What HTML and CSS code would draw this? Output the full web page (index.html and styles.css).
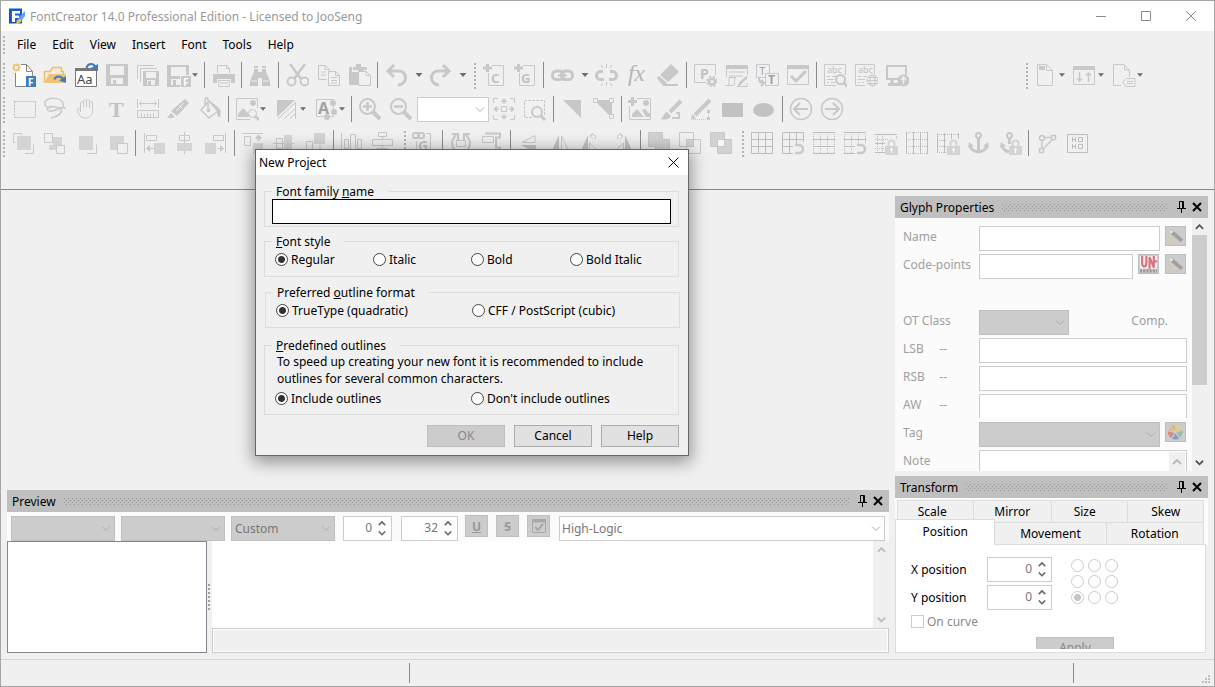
FILE: index.html
```html
<!DOCTYPE html>
<html lang="en">
<head>
<meta charset="utf-8">
<title>FontCreator 14.0 Professional Edition</title>
<link rel="stylesheet" href="styles.css">
</head>
<body>
<svg class="sprite" aria-hidden="true">
  <symbol id="chev-down" viewBox="0 0 10 6"><path d="M1 .5 5 4.500 9 .5"/></symbol>
  <symbol id="chev-up" viewBox="0 0 10 6"><path d="M1 5 5 1 9 5"/></symbol>
  <symbol id="caret" viewBox="0 0 7 4"><path d="M0 0h7L3.500 4z"/></symbol>
  <symbol id="pin" viewBox="0 0 9 12"><path d="M2.500 7V.5h4V7M0 7.500h9M4.500 7v5M5.500 1v6"/></symbol>
  <symbol id="cross" viewBox="0 0 10 10"><path d="M1 1l8 8M9 1 1 9"/></symbol>
  <symbol id="lock" viewBox="0 0 13 16"><path d="M3.500 7V4.500a3 3 0 0 1 6 0V7" fill="none" stroke="#d4d4d4" stroke-width="2"/><path d="M0 7h13v9H0z" fill="#d4d4d4" stroke="none"/><path d="M6.500 9v5M5 10.500h3" stroke="#fff"/></symbol>
  <symbol id="wand" viewBox="0 0 16 16"><path d="M4 1l11 9.500-2 3L2 4z" fill="#a0a0a0"/><path d="M4 1.500 6 3.500 4 5.500 2 4z" fill="#e6e6e6"/><path d="M1 8h1M3 11h1M6 9h1M9 14h1M1 15h1M6 13h1" stroke="#e2c48e" stroke-width="2"/></symbol>
</svg>

<div class="window">
  <header class="titlebar">
    <svg class="logo" viewBox="0 0 16 16"><path d="M0 .500h13v15H0z" fill="#1652b8"/><path d="M1.500 2h10v12h-10z" fill="#1b62e0"/><path d="M3 3h8v2.500H6v2h4V10H6v4H3z" fill="#fff"/><path d="M16 3 11 8l-2 4 3 1 4-5z" fill="#58a8e8"/><path d="M8 12l3-1 2 2-4 3H7z" fill="#e8c64a"/></svg>
    <h1 class="title">FontCreator 14.0 Professional Edition - Licensed to JooSeng</h1>
    <div class="caption">
      <button aria-label="Minimize"><svg viewBox="0 0 10 10"><path d="M0 5.500h10"/></svg></button>
      <button aria-label="Maximize"><svg viewBox="0 0 10 10"><path d="M.5.5h9v9h-9z"/></svg></button>
      <button aria-label="Close"><svg viewBox="0 0 10 10"><path d="M0 0l10 10M10 0 0 10"/></svg></button>
    </div>
  </header>

  <nav class="menubar">
    <span class="grip"></span>
    <button>File</button><button>Edit</button><button>View</button><button>Insert</button><button>Font</button><button>Tools</button><button>Help</button>
  </nav>

  <div class="toolbars">
    <div class="toolbar">
      <span class="grip"></span>
      <button aria-label="New project"><svg viewBox="0 0 24 24"><path d="M3.500 10v13.500h17V8.500l-6-7H9M14.500 1.500v7h6" fill="#fff" stroke="#858585"/><path d="M4.500.500v8M.500 4.500h8M1.500 1.500l6 6M7.500 1.500l-6 6" stroke="#efc277" stroke-width="2"/><path d="M3 3h3v3H3z" fill="#f0f0f0" stroke="none"/><path d="M14 13h10v11H14z" fill="#3f7cbb" stroke="none"/><text x="16" y="22.500" font-size="10" fill="#fff">F</text></svg></button>
      <button aria-label="Open"><svg viewBox="0 0 24 24"><path d="M1.500 19.500v-11h6l2-4h9v4h2v3" stroke="#e9bf76" stroke-width="1.500" fill="#f6ecd8"/><path d="M1 20l5-9h17l-2 9z" fill="#efc277" stroke="none"/><path d="M11.500 16.500c1-4 7-4 8.500 0" stroke="#3f7cbb" stroke-width="2"/><path d="M16 17.500 23 13v7z" fill="#3f7cbb" stroke="none"/></svg></button>
      <button aria-label="Installed fonts"><svg viewBox="0 0 24 24"><path d="M1.500 5.500h21v18h-21z" fill="#fff" stroke="#777"/><path d="M1 5h22v3H1z" fill="#777" stroke="none"/><text x="3" y="21" font-size="13" fill="#444">Aa</text><path d="M12.500 5c1-5 7-5 8.500-1.500" stroke="#3f7cbb" stroke-width="2"/><path d="M17 5 24 1v7z" fill="#3f7cbb" stroke="none"/></svg></button>
      <button aria-label="Save" disabled><svg viewBox="0 0 24 24"><path class="f" d="M1 1h22v22H1zM5 3v9h14V3zM6 15v6h12v-6z" fill-rule="evenodd"/><path class="f" d="M8 17h3v5H8z"/></svg></button>
      <button aria-label="Save all" disabled><svg viewBox="0 0 24 24"><path d="M1.500 16V2.500H18M4.500 19V5.500H21"/><path class="f" d="M7 8h16v15H7zM10 9v6h10V9zM11 17v5h8v-5z" fill-rule="evenodd"/><path class="f" d="M12 18h3v4h-3z"/></svg></button>
      <button class="drop" aria-label="Export font" disabled><svg viewBox="0 0 24 24"><path class="f" d="M0 2h22v10h-3V4H4v9h9v11H0zM4 16v6h9v-6z" fill-rule="evenodd"/><path class="f" d="M6 17h3v5H6zM14 13h10v11H14z"/><text x="16" y="22.500" font-size="10" class="w">F</text></svg><svg class="caret"><use href="#caret"/></svg></button>
      <span class="sep"></span>
      <button aria-label="Print" disabled><svg viewBox="0 0 24 24"><path d="M6.500 10V2.500h9l3 3V10M15.500 2.500v3h3"/><path class="f" d="M2 11h22v9h-4v-4H6v4H2z"/><path d="M7.500 17.500h11v6h-11zM9 20h8"/></svg></button>
      <span class="sep"></span>
      <button aria-label="Find" disabled><svg viewBox="0 0 24 24"><path class="f" d="M6 6h4v3h4V6h4v3l4 9v5h-8v-8h-4v8H2v-5L6 9zM6 5V3h4v2zM14 5V3h4v2z"/><path d="M3 18h6M15 18h6" stroke="#f0f0f0"/></svg></button>
      <span class="sep"></span>
      <button aria-label="Cut" disabled><svg viewBox="0 0 24 24"><path d="M5 1l11 15M20 1 9 16" stroke-width="2.500"/><circle cx="6.500" cy="18.500" r="4" stroke-width="2"/><circle cx="19.500" cy="18.500" r="4" stroke-width="2"/></svg></button>
      <button aria-label="Copy" disabled><svg viewBox="0 0 24 24"><path d="M2.500 2.500h7l4 4v3M9 2.500v4h4M2.500 2.500v14h8M5 9h5M5 12h5M12.500 8.500h7l4 4v10h-11zM19.500 8.500v4h4M15 14.500h6M15 17.500h6M15 20h6"/></svg></button>
      <button aria-label="Paste" disabled><svg viewBox="0 0 24 24"><path class="f" d="M2 4h3v5h12V4h3v3h-9v15H2z"/><path class="f" d="M6 4h3V1h5v3h3v3H6z"/><path d="M11.500 8.500h8l4 4v10h-12zM19 8.500v4h4" fill="#f0f0f0"/></svg></button>
      <span class="sep"></span>
      <button class="drop wide" aria-label="Undo" disabled><svg viewBox="0 0 24 24"><path d="M10 2 4 8l6 6M4 8h10c10 0 10 13 0 14" stroke-width="3"/></svg><svg class="caret"><use href="#caret"/></svg></button>
      <button class="drop wide" aria-label="Redo" disabled><svg viewBox="0 0 24 24"><path d="M15 2l6 6-6 6M21 8H11C1 8 1 21 11 22" stroke-width="3"/></svg><svg class="caret"><use href="#caret"/></svg></button>
      <span class="grip mid"></span>
      <button aria-label="Add character" disabled><svg viewBox="0 0 24 24"><path d="M10 2.500h11.500v20h-15V10"/><path d="M5.500 1v8M1 5h9" stroke-width="3"/><text x="9" y="19.500" font-size="13">C</text></svg></button>
      <button aria-label="Add glyph" disabled><svg viewBox="0 0 24 24"><path d="M10 2.500h11.500v20h-15V10"/><path d="M5.500 1v8M1 5h9" stroke-width="3"/><text x="8" y="19.500" font-size="13">G</text></svg></button>
      <span class="sep"></span>
      <button class="drop wide" aria-label="Link" disabled><svg viewBox="0 0 24 24"><rect x="2.500" y="8" width="11" height="8.500" rx="4" stroke-width="3"/><rect x="11.500" y="8" width="11" height="8.500" rx="4" stroke-width="3"/><path d="M8 12.500h9" stroke-width="2"/></svg><svg class="caret"><use href="#caret"/></svg></button>
      <button aria-label="Unlink" disabled><svg viewBox="0 0 24 24"><path d="M9 8.500H6a3.500 4 0 0 0 0 8h4M16 8.500h3a3.500 4 0 0 1 0 8h-4" stroke-width="3"/><path d="M12.500 1v4M12.500 19v4M7 2l2 3M18 2l-2 3M7 23l2-3M18 23l-2-3"/></svg></button>
      <button aria-label="Function" disabled><svg viewBox="0 0 24 24"><text class="fx" x="3" y="18">fx</text></svg></button>
      <button aria-label="Eraser" disabled><svg viewBox="0 0 24 24"><path class="f" d="M15 1l8 8L12 19l-8-7z"/><path d="M2 15l6 7h14" stroke-width="2"/><path class="f" d="M1 15l2-2 8 7-2 3H8z"/></svg></button>
      <span class="sep"></span>
      <button aria-label="Project properties" disabled><svg viewBox="0 0 24 24"><path d="M13 19.500H1.500v-18h21V12"/><text x="7" y="16" font-size="14">P</text><circle cx="19" cy="18.500" r="3" stroke-width="2.500"/><circle cx="19" cy="18.500" r="5" stroke-width="1.500" stroke-dasharray="2 2"/></svg></button>
      <button aria-label="Feature designer" disabled><svg viewBox="0 0 24 24"><path d="M2.500 2.500h21V12M2.500 2.500V14M5 9h16M5 13h14M1 22.500h8c3 0 0-8 3-8H5v8M14 23l2-4 7-6M13 23.500h10V20"/><path class="f" d="M2 2h22v4H2z"/><path d="M15 22l8-8" stroke-width="2"/></svg></button>
      <button aria-label="Transform script" disabled><svg viewBox="0 0 24 24"><path d="M1.500 1.500h13v13h-13z" fill="#f0f0f0"/><path d="M10.500 10.500h13v12h-13z" fill="#f0f0f0"/><text x="4.500" y="12" font-size="10" class="d n">T</text><text x="13" y="21" font-size="12" class="d">T</text><path d="M4 15c0 4 1 5 5 5M6 17l3 3-3 3" stroke-width="2"/></svg></button>
      <button aria-label="Validate" disabled><svg viewBox="0 0 24 24"><path d="M1.500 2.500h21v19h-21z"/><path class="f" d="M1 2h22v4H1z"/><path d="M5 13l5 5L20 8" stroke-width="3"/></svg></button>
      <span class="sep"></span>
      <button aria-label="Preview text" disabled><svg viewBox="0 0 24 24"><path d="M13 22.500H1.500v-21h21V12"/><text class="n" x="4" y="10" font-size="9">abc</text><path d="M4 13.500h3m2 0h4M4 16.500h7M4 19.500h2m2 0h4"/><circle cx="17.500" cy="16.500" r="4.500" stroke-width="2"/><path d="M20.500 19.500l4 4" stroke-width="3"/></svg></button>
      <button aria-label="Web preview" disabled><svg viewBox="0 0 24 24"><path d="M11 22.500H1.500v-21h19V11"/><text class="n" x="4" y="10" font-size="9">abc</text><path d="M4 13.500h3m2 0h4M4 16.500h7M4 19.500h2m2 0h2"/><circle cx="18.500" cy="17.500" r="5.500"/><ellipse cx="18.500" cy="17.500" rx="2.500" ry="5.500"/><path d="M13 17.500h11M14 14.500h9M14 20.500h9"/></svg></button>
      <button aria-label="Install font" disabled><svg viewBox="0 0 24 24"><path d="M14 16H2V3h19v9" stroke-width="2"/><path d="M7 17v5M3 21.500h12" stroke-width="3"/><circle class="f" cx="18.500" cy="17.500" r="6"/><path d="M18.500 21v-6M16 17l2.500-3 2.500 3" stroke="#f0f0f0" stroke-width="1.500"/></svg></button>
      <div class="tool-end">
        <span class="grip mid"></span>
        <button class="drop mid" aria-label="Page" disabled><svg viewBox="0 0 24 24"><path d="M3.500 1.500h9l6 6v15h-15zM12.500 1.500v6h6"/><path class="f" d="M5 3h6v4H5z"/></svg><svg class="caret"><use href="#caret"/></svg></button>
        <button class="drop mid" aria-label="Sort" disabled><svg viewBox="0 0 24 24"><path d="M.500 3.500h21v18H.500z"/><path class="f" d="M0 3h22v4H0z"/><path d="M6.500 9v9M4 15.500 6.500 18 9 15.500M15.500 19v-9M13 12.500l2.500-2.500 2.500 2.500" stroke-width="1.500"/></svg><svg class="caret"><use href="#caret"/></svg></button>
        <button class="drop mid" aria-label="Tag page" disabled><svg viewBox="0 0 24 24"><path d="M9 22.500H1.500v-21h10l6 5.500v7M12.500 1.500V7h5M10.500 19l4-3.500h8.500v8h-9zM15 18.500h6M15 20.500h6"/></svg><svg class="caret"><use href="#caret"/></svg></button>
      </div>
    </div>

    <div class="toolbar">
      <span class="grip"></span>
      <button aria-label="Select" disabled><svg viewBox="0 0 24 24"><path class="k" d="M2.500 4.500h21M2.500 20.500h21M2.500 4.500v16M23.500 4.500v16" stroke-dasharray="2 1"/></svg></button>
      <button aria-label="Lasso" disabled><svg viewBox="0 0 24 24"><path d="M8 11C3 11 1 8 2 5c3-5 16-5 18 1 1 3 0 5-3 5-4 0-7-3-11-1s-1 5 3 4c6-1 8-4 14-3M18 12c2 4-4 8-10 9" stroke-width="1.500"/></svg></button>
      <button aria-label="Pan" disabled><svg viewBox="0 0 24 24"><path d="M6.500 15V6c0-2 3-2 3 0v4-6c0-2 3-2 3 0v6-6c0-2 3-2 3 0v7-5c0-2 3-2 3 0v8c0 8-11 10-14 2L3.500 13c0-3 2-2 3 0"/></svg></button>
      <button aria-label="Text" disabled><svg viewBox="0 0 24 24"><text class="serif" x="4" y="20">T</text></svg></button>
      <button aria-label="Measure" disabled><svg viewBox="0 0 24 24"><path d="M1.500 2v9M22.500 2v9M3 6.500h18M6 4 3.500 6.500 6 9M18 4l2.500 2.500L18 9M1.500 13.500h21v7h-21zM5.500 16v4M8.500 17v3M11.500 16v4M14.500 17v3M17.500 16v4"/></svg></button>
      <button aria-label="Knife" disabled><svg viewBox="0 0 24 24"><path class="f" d="M18 2l4 4-12 13-6-5zM4 16l4 4-3 1H0z"/><path d="M9 14l8-8M12 8l3 3" stroke="#f0f0f0"/></svg></button>
      <button aria-label="Fill" disabled><svg viewBox="0 0 24 24"><path d="M11 4 3 13l8 8 9-7zM10 12V3c0-3-3-3-3 0v5" stroke-width="1.500"/><path class="f" d="M11 3l10 8c2 2 2 6 1 9-2 1-3-2-3-6zM9 12h3v3H9z"/></svg></button>
      <span class="sep"></span>
      <button class="drop step" aria-label="Background image" disabled><svg viewBox="0 0 24 24"><path d="M15 22.500H1.500v-21h21v10"/><circle class="f" cx="18" cy="6" r="3"/><path class="f" d="M3 20v-3l5-6 6 6v3z"/><circle cx="17.500" cy="16.500" r="4"/><path d="M20 19l4 4" stroke-width="3"/></svg><svg class="caret"><use href="#caret"/></svg></button>
      <button class="drop mid" aria-label="Contour fill" disabled><svg viewBox="0 0 24 24"><path class="f" d="M2 3h18L2 20z"/><path d="M3 22 21 5M9 22 21 11M15 22l6-6M20.500 5v17"/></svg><svg class="caret"><use href="#caret"/></svg></button>
      <button class="drop" aria-label="Glyph outline" disabled><svg viewBox="0 0 24 24"><path d="M2.500 2.500h17v17h-17z"/><text class="d" x="4" y="17" font-size="16">A</text><g class="f"><circle cx="19" cy="6" r="3"/><circle cx="20" cy="15" r="3"/><circle cx="13" cy="20" r="3"/></g></svg><svg class="caret"><use href="#caret"/></svg></button>
      <span class="sep"></span>
      <button aria-label="Zoom in" disabled><svg viewBox="0 0 24 24"><circle cx="9.500" cy="9.500" r="7.500" stroke-width="2"/><path d="M15 15l7 7" stroke-width="4"/><path d="M5 9.500h9M9.500 5v9" stroke-width="2.500"/></svg></button>
      <button aria-label="Zoom out" disabled><svg viewBox="0 0 24 24"><circle cx="9.500" cy="9.500" r="7.500" stroke-width="2"/><path d="M15 15l7 7" stroke-width="4"/><path d="M5 9.500h9" stroke-width="2.500"/></svg></button>
      <span class="select zoom"><select aria-label="Zoom"><option></option></select><svg><use href="#chev-down"/></svg></span>
      <button aria-label="Zoom to fit" disabled><svg viewBox="0 0 24 24"><path d="M1.500 6V1.500H6M18 1.500h4.500V6M22.500 18v4.500H18M6 22.500H1.500V18M9.500 9.500h5v5h-5z"/><path d="M12 7V3M9.500 5 12 2.500 14.500 5M12 17v4M9.500 19l2.500 2.500 2.500-2.500M7 12H3M5 9.500 2.500 12 5 14.500M17 12h4M19 9.500l2.500 2.500-2.500 2.500" stroke-width="1.500"/></svg></button>
      <button aria-label="Zoom to selection" disabled><svg viewBox="0 0 24 24"><path d="M9 20.500H1.500v-17h20V18" stroke-dasharray="3 1"/><circle cx="14" cy="15" r="5" fill="#f0f0f0" stroke-width="2"/><path d="M18 19l4 4" stroke-width="3"/></svg></button>
      <span class="sep"></span>
      <button aria-label="Filled contour" disabled><svg viewBox="0 0 24 24"><path class="f" d="M3 3h18v18z"/></svg></button>
      <button aria-label="Show nodes" disabled><svg viewBox="0 0 24 24"><path class="f" d="M3 3h18v18z"/><path d="M2.500 1.500h4v4h-4zM18.500 1.500h4v4h-4zM18.500 17.500h4v4h-4z" fill="#f0f0f0"/></svg></button>
      <span class="sep"></span>
      <button aria-label="Import image" disabled><svg viewBox="0 0 24 24"><path d="M9 1.500h13.500v21h-21V9"/><path d="M4.500 0v9M0 4.500h9" stroke-width="3"/><circle class="f" cx="18" cy="6" r="3"/><path class="f" d="M4 20v-3l5-5 7 8zM14 13l3-1 5 5v3h-4z"/></svg></button>
      <button aria-label="Draw brush" disabled><svg viewBox="0 0 24 24"><path d="M11 15 22 4" stroke-width="4"/><path class="f" d="M1 22c4-1 3-6 7-7l4 4c-1 3-5 4-11 3z"/><path d="M13 21h7v-5h-3" stroke-width="2"/></svg></button>
      <button aria-label="Draw contour" disabled><svg viewBox="0 0 24 24"><path d="M5 18 20 3" stroke-width="4"/><path class="f" d="M2 17l4 4-5 2zM17 13h3v3h-3zM17 20h3v3h-3z"/><path d="M3 22.500h14M18.500 16v4" stroke-dasharray="1 1"/></svg></button>
      <button aria-label="Rectangle" disabled><svg viewBox="0 0 24 24"><path class="f b" d="M1 6h21v14H1z"/></svg></button>
      <button aria-label="Ellipse" disabled><svg viewBox="0 0 24 24"><ellipse class="f b" cx="11.500" cy="13" rx="10.500" ry="7"/></svg></button>
      <span class="sep"></span>
      <button aria-label="Previous" disabled><svg viewBox="0 0 24 24"><circle cx="12" cy="12" r="10.500" stroke-width="1.500"/><path d="M11 6l-6 6 6 6M6 12h13" stroke-width="2"/></svg></button>
      <button aria-label="Next" disabled><svg viewBox="0 0 24 24"><circle cx="12" cy="12" r="10.500" stroke-width="1.500"/><path d="M13 6l6 6-6 6M18 12H5" stroke-width="2"/></svg></button>
    </div>

    <div class="toolbar">
      <span class="grip"></span>
      <button aria-label="Bring to front" disabled><svg viewBox="0 0 24 24"><path class="f l" d="M5 5h14v14H5z"/><path d="M3.500 11.500h-2v-9h8v2M13 22.500h8.500v-9"/></svg></button>
      <button aria-label="Bring forward" disabled><svg viewBox="0 0 24 24"><path class="f l" d="M10 6h9v8h-6v5H6v-5h4z"/><path d="M1.500 2.500h8v9h-8zM13.500 14.500h8v8h-8z"/></svg></button>
      <button aria-label="Send backward" disabled><svg viewBox="0 0 24 24"><path class="f l" d="M5 5h14v14H5z"/><path d="M13 22.500h9.500v-9"/></svg></button>
      <button aria-label="Send to back" disabled><svg viewBox="0 0 24 24"><path class="f l" d="M5 5h14v14H5z"/><path d="M12.500 12.500h10v10h-10z" fill="#f0f0f0"/></svg></button>
      <span class="sep"></span>
      <button aria-label="Align left" disabled><svg viewBox="0 0 24 24"><path d="M2.500 2v20M4.500 4.500h10v5h-10zM5 17.500h7"/><path class="f" d="M4 17.500 8 14v7z"/><path class="f l" d="M12 12h11v11H12z"/></svg></button>
      <button aria-label="Align center" disabled><svg viewBox="0 0 24 24"><path d="M11.500 1v22M6.500 4.500h10v5h-10z"/><path class="f l" d="M4 12h15v8H4z"/></svg></button>
      <button aria-label="Align right" disabled><svg viewBox="0 0 24 24"><path d="M21.500 2v20M9.500 4.500h10v5h-10zM13 17.500h7"/><path class="f" d="M20 17.500 16 14v7z"/><path class="f l" d="M1 12h11v11H1z"/></svg></button>
      <span class="sep"></span>
      <button aria-label="Align top" disabled><svg viewBox="0 0 24 24"><path d="M1 2.500h21M3.500 5.500h6v9h-6z"/><path d="M17.500 10V5M15 7.500 17.500 5 20 7.500" stroke-width="2"/><path class="f l" d="M12 12h10v11H12z"/></svg></button>
      <button aria-label="Align middle" disabled><svg viewBox="0 0 24 24"><path d="M1 12.500h21M4.500 7.500h6v10h-6z"/><path class="f l" d="M12 4h8v16h-8z"/></svg></button>
      <button aria-label="Align bottom" disabled><svg viewBox="0 0 24 24"><path d="M3.500 10.500h6v10h-6zM1 22.500h21M17 14v5"/><path class="f l" d="M11 2h11v11H11z"/></svg></button>
      <span class="sep"></span>
      <button aria-label="Distribute horizontally" disabled><svg viewBox="0 0 24 24"><path d="M1.500 2v20M4.500 8.500h4v9h-4zM10.500 3.500h5v18h-5zM17.500 8.500h4v9h-4z"/></svg></button>
      <button aria-label="Distribute vertically" disabled><svg viewBox="0 0 24 24"><path d="M7.500 1.500h8v4h-8zM1.500 8.500h20v6h-20zM5.500 17.500h11v4h-11zM11.500 5v3M11.500 15v3"/></svg></button>
      <span class="grip mid"></span>
      <button aria-label="Link glyph" disabled><svg viewBox="0 0 24 24"><rect x="1" y="2" width="6" height="5" rx="2" stroke-width="2"/><rect x="6" y="2" width="6" height="5" rx="2" stroke-width="2"/><path d="M14 2.500h4.500v20h-14V10"/><text x="6" y="20" font-size="14">G</text></svg></button>
      <span class="sep"></span>
      <button aria-label="Rotate" disabled><svg viewBox="0 0 24 24"><path d="M7 4C0 11 3 21 12 21s12-10 5-17M3 3h6v6M21 3h-6v6" stroke-width="2"/><path d="M7.500 9.500h9v6h-9z"/></svg></button>
      <button aria-label="Skew" disabled><svg viewBox="0 0 24 24"><path d="M5 2.500h15v4h-4v10h4v4H9" stroke-width="2"/><path d="M2.500 5.500h11v6h-11z" fill="#f0f0f0"/></svg></button>
      <span class="sep"></span>
      <button aria-label="Flip vertical" disabled><svg viewBox="0 0 24 24"><path d="M5 11.500h13v-7z"/><path class="f b" d="M4 14h15v8z"/></svg></button>
      <button aria-label="Flip horizontal" disabled><svg viewBox="0 0 24 24"><path class="f b" d="M11 4v18H3z"/><path d="M13.500 5v17h8z"/></svg></button>
      <button aria-label="Rotate left" disabled><svg viewBox="0 0 24 24"><path class="f b" d="M9 4v18H1z"/><path d="M10.500 12 21 22H10.500zM16 8c2-5-2-5-5-3M14 2l-3 3 3 3"/></svg></button>
      <button aria-label="Rotate right" disabled><svg viewBox="0 0 24 24"><path class="f b" d="M15 4v18h8z"/><path d="M13.500 12 3 22h10.500zM8 8c-2-5 2-5 5-3M10 2l3 3-3 3"/></svg></button>
      <span class="sep"></span>
      <button aria-label="Union" disabled><svg viewBox="0 0 24 24"><path d="M1.500 1.500h14v7h7v14h-14v-7h-7z" fill="#d2d2d2"/></svg></button>
      <button aria-label="Intersection" disabled><svg viewBox="0 0 24 24"><path d="M1.500 1.500h14v14h-14zM8.500 8.500h14v14h-14z"/><path d="M8.500 8.500h7v7h-7z" fill="#d2d2d2"/></svg></button>
      <button aria-label="Exclusion" disabled><svg viewBox="0 0 24 24"><path d="M1.500 1.500h14v7h7v14h-14v-7h-7z" fill="#d2d2d2"/><path d="M8.500 8.500h7v7h-7z" fill="#f6f6f6"/></svg></button>
      <span class="grip mid"></span>
      <button aria-label="Grid" disabled><svg viewBox="0 0 24 24"><path class="k" d="M1.500 1.500h21v21h-21zM8.500 1v21M15.500 1v21M1 8.500h22M1 15.500h22"/></svg></button>
      <button aria-label="Snap to grid" disabled><svg viewBox="0 0 24 24"><path class="k" d="M22.500 11V1.500h-21v21H12M8.500 1v21M15.500 1v12M1 8.500h22M1 15.500h11"/><path d="M14 14h4a4 4 0 0 1 0 8h-4" stroke-width="2.500"/></svg></button>
      <button aria-label="Guidelines" disabled><svg viewBox="0 0 24 24"><path class="k" d="M1 1.500h22M1 8.500h22M1 15.500h22M1 22.500h22"/><path class="k" d="M1.500 1v22M8.500 1v22M15.500 1v22M22.500 1v22" stroke-dasharray="1 1"/></svg></button>
      <button aria-label="Snap to guidelines" disabled><svg viewBox="0 0 24 24"><path class="k" d="M1 1.500h22M1 8.500h22M1 15.500h11M1 22.500h11"/><path class="k" d="M1.500 1v22M8.500 1v22M15.500 1v12M22.500 1v11" stroke-dasharray="1 1"/><path d="M14 14h4a4 4 0 0 1 0 8h-4" stroke-width="2.500"/></svg></button>
      <button aria-label="Lock guidelines" disabled><svg viewBox="0 0 24 24"><path class="k" d="M1 3.500h22M1 12.500h10M1 21.500h10"/><path class="k" d="M1 8.500h14M1 17.500h10M3.500 3v19M8.500 3v19M22.500 3v5" stroke-dasharray="1 1"/><use href="#lock" x="11" y="8" width="13" height="16"/></svg></button>
      <button aria-label="Metrics" disabled><svg viewBox="0 0 24 24"><path class="k" d="M1.500 1v22M8.500 1v22M15.500 1v22M22.500 1v22"/><path class="k" d="M1 1.500h22M1 8.500h22M1 15.500h22M1 22.500h22" stroke-dasharray="1 1"/></svg></button>
      <button aria-label="Lock metrics" disabled><svg viewBox="0 0 24 24"><path class="k" d="M1.500 2v20M8.500 2v20M15.500 2v6M22.500 2v6"/><path class="k" d="M1 3.500h22M1 9.500h10M1 15.500h10M1 21.500h10" stroke-dasharray="1 1"/><use href="#lock" x="11" y="8" width="13" height="16"/></svg></button>
      <button aria-label="Anchors" disabled><svg viewBox="0 0 24 24"><circle cx="11.500" cy="4.500" r="2.500" stroke-width="2"/><path d="M11.500 7v14M3 14c1 9 16 9 17 0" stroke-width="3"/><path class="f" d="M1 17l1-6 5 4zM22 17l-1-6-5 4z"/></svg></button>
      <button aria-label="Lock anchors" disabled><svg viewBox="0 0 24 24"><circle cx="11.500" cy="4.500" r="2.500" stroke-width="2"/><path d="M11.500 7v6M4 14c1 5 4 6 7 7" stroke-width="3"/><path class="f" d="M2 17l1-6 5 4z"/><use href="#lock" x="11" y="8" width="13" height="16"/></svg></button>
      <span class="sep"></span>
      <button aria-label="Contour direction" disabled><svg viewBox="0 0 24 24"><circle cx="7" cy="7" r="2.500" stroke-width="1.500"/><path d="M10 6.500h6M7 10v7M9 17l8-8M16.500 4.500h4v4h-4zM4.500 17.500h4v4h-4z" stroke-width="1.500"/></svg></button>
      <button aria-label="Glyph overview" disabled><svg viewBox="0 0 24 24"><path class="k" d="M1.500 3.500h20v18h-20zM12.500 6.500h4v4h-4zM12.500 13.500h4v4h-4z"/><path class="k" d="M6.500 6v5M9.500 6v5M7 8.500h2M6.500 13v5M9.500 13v5M7 15.500h2"/></svg></button>
    </div>
  </div>

  <main class="workspace">
    <section class="left">
      <div class="panel preview">
        <header class="panel-head"><h2>Preview</h2><i class="tex"></i><button aria-label="Pin preview"><svg class="pin"><use href="#pin"/></svg></button><button aria-label="Close preview"><svg class="x"><use href="#cross"/></svg></button></header>
        <div class="preview-bar">
          <span class="select off"><select aria-label="Script" disabled><option></option></select><svg><use href="#chev-down"/></svg></span>
          <span class="select off"><select aria-label="Language" disabled><option></option></select><svg><use href="#chev-down"/></svg></span>
          <span class="select off"><select aria-label="Preset" disabled><option>Custom</option></select><svg><use href="#chev-down"/></svg></span>
          <span class="spin s1"><input aria-label="Spacing" value="0" disabled><span><button aria-label="More" disabled><svg><use href="#chev-up"/></svg></button><button aria-label="Less" disabled><svg><use href="#chev-down"/></svg></button></span></span>
          <span class="spin s2"><input aria-label="Font size" value="32" disabled><span><button aria-label="Larger" disabled><svg><use href="#chev-up"/></svg></button><button aria-label="Smaller" disabled><svg><use href="#chev-down"/></svg></button></span></span>
          <div class="toggles">
            <button class="sq" disabled><u>U</u></button>
            <button class="sq" disabled><s>S</s></button>
            <button class="sq" aria-label="Options" disabled><svg viewBox="0 0 14 14"><path d="M.500.500h13v13H.500z"/><path d="M0 2h14" stroke-width="3"/><path d="M3 8l3 3 5-6" stroke-width="2"/></svg></button>
          </div>
          <span class="select text"><select aria-label="Preview text"><option>High-Logic</option></select><svg><use href="#chev-down"/></svg></span>
        </div>
        <div class="preview-body">
          <div class="list"></div>
          <div class="splitter"><span></span></div>
          <div class="stage">
            <div class="canvas">
              <div class="bar"><button aria-label="Scroll up" disabled><svg><use href="#chev-up"/></svg></button><button aria-label="Scroll down" disabled><svg><use href="#chev-down"/></svg></button></div>
            </div>
            <div class="info"></div>
          </div>
        </div>
      </div>
    </section>

    <aside class="dock">
      <section class="panel glyph">
        <header class="panel-head"><h2>Glyph Properties</h2><i class="tex"></i><button aria-label="Pin glyph properties"><svg class="pin"><use href="#pin"/></svg></button><button aria-label="Close glyph properties"><svg class="x"><use href="#cross"/></svg></button></header>
        <div class="glyph-body">
          <form class="fields">
            <div class="row"><label for="g-name">Name</label><input id="g-name" disabled><button type="button" class="sq" aria-label="Generate name" disabled><svg><use href="#wand"/></svg></button></div>
            <div class="row"><label for="g-code">Code-points</label><input id="g-code" disabled><button type="button" class="sq tight" aria-label="Unicode" disabled><svg viewBox="0 0 16 16"><path d="M0 0h16v12H0z" fill="#f1f1f1"/><path d="M2 0v6c0 5 4 5 4 0V0M9 12V1l4 10V0M14 5h2" fill="none" stroke="#d9727f" stroke-width="2"/><path d="M0 14h16" stroke="#999" stroke-width="3" stroke-dasharray="2 1"/></svg></button><button type="button" class="sq" aria-label="Generate code-point" disabled><svg><use href="#wand"/></svg></button></div>
            <div class="row"></div>
            <div class="row"><label for="g-ot">OT Class</label><span class="select off short"><select id="g-ot" disabled><option></option></select><svg><use href="#chev-down"/></svg></span><span class="comp">Comp.</span></div>
            <div class="row"><label for="g-lsb">LSB <span>--</span></label><input id="g-lsb" disabled></div>
            <div class="row"><label for="g-rsb">RSB <span>--</span></label><input id="g-rsb" disabled></div>
            <div class="row cut"><label for="g-aw">AW <span>--</span></label><input id="g-aw" disabled></div>
            <div class="row"><label for="g-tag">Tag</label><span class="select off grow"><select id="g-tag" disabled><option></option></select><svg><use href="#chev-down"/></svg></span><button type="button" class="sq" aria-label="Tag colour" disabled><svg viewBox="0 0 16 16"><g stroke="#ccc"><path d="M8 8 2.500 2.500A8 8 0 0 1 8 .500z" fill="#dfb184"/><path d="M8 8V.500a8 8 0 0 1 7 5z" fill="#e2cd94"/><path d="M8 8l7-2.500a8 8 0 0 1-3 8z" fill="#9dbba9"/><path d="M8 8l4 6a8 8 0 0 1-8 0z" fill="#7e9dc8"/><path d="M8 8l-4 6a8 8 0 0 1-3.500-8z" fill="#d58d80"/><path d="M8 8 .500 6l2-3.500z" fill="#dfb184"/></g></svg></button></div>
            <div class="row"><label for="g-note">Note</label><span class="note"><textarea id="g-note" disabled></textarea><svg><use href="#chev-up"/></svg></span></div>
          </form>
          <div class="bar live"><button aria-label="Scroll up"><svg><use href="#chev-up"/></svg></button><i></i><button aria-label="Scroll down"><svg><use href="#chev-down"/></svg></button></div>
        </div>
      </section>

      <section class="panel transform">
        <header class="panel-head"><h2>Transform</h2><i class="tex"></i><button aria-label="Pin transform"><svg class="pin"><use href="#pin"/></svg></button><button aria-label="Close transform"><svg class="x"><use href="#cross"/></svg></button></header>
        <div class="tabs" role="tablist">
          <div class="tabrow"><button role="tab">Scale</button><button role="tab">Mirror</button><button role="tab">Size</button><button role="tab">Skew</button></div>
          <div class="tabrow second"><button role="tab" class="on" aria-selected="true">Position</button><button role="tab">Movement</button><button role="tab">Rotation</button></div>
        </div>
        <div class="tabpage">
          <div class="pos">
            <div class="posfields">
              <div class="posrow"><label for="px">X position</label><span class="spin s3"><input id="px" value="0" disabled><span><button aria-label="Increase X" disabled><svg><use href="#chev-up"/></svg></button><button aria-label="Decrease X" disabled><svg><use href="#chev-down"/></svg></button></span></span></div>
              <div class="posrow"><label for="py">Y position</label><span class="spin s3"><input id="py" value="0" disabled><span><button aria-label="Increase Y" disabled><svg><use href="#chev-up"/></svg></button><button aria-label="Decrease Y" disabled><svg><use href="#chev-down"/></svg></button></span></span></div>
            </div>
            <div class="origin" role="radiogroup" aria-label="Origin">
              <input type="radio" name="o" aria-label="Top left" disabled><input type="radio" name="o" aria-label="Top" disabled><input type="radio" name="o" aria-label="Top right" disabled>
              <input type="radio" name="o" aria-label="Left" disabled><input type="radio" name="o" aria-label="Center" disabled><input type="radio" name="o" aria-label="Right" disabled>
              <input type="radio" name="o" aria-label="Bottom left" checked disabled><input type="radio" name="o" aria-label="Bottom" disabled><input type="radio" name="o" aria-label="Bottom right" disabled>
            </div>
          </div>
          <label class="check"><input type="checkbox" disabled>On curve</label>
          <div class="applyrow"><button class="btn" disabled>Apply</button></div>
        </div>
      </section>
    </aside>
  </main>

  <footer class="status"><span></span><span></span><svg viewBox="0 0 9 9"><path d="M6 0h2v2H6zM3 3h2v2H3zM6 3h2v2H6zM0 6h2v2H0zM3 6h2v2H3zM6 6h2v2H6z"/></svg></footer>

  <div class="dialog" role="dialog" aria-labelledby="dlg-title">
    <header class="dialog-head"><h2 id="dlg-title">New Project</h2><button aria-label="Close dialog"><svg viewBox="0 0 11 11"><path d="M.500.500l10 10M10.500.500l-10 10"/></svg></button></header>
    <form class="dialog-body">
      <fieldset class="name"><legend><label for="family">Font family <u>n</u>ame</label></legend><input id="family" type="text"></fieldset>
      <fieldset class="opts"><legend><u>F</u>ont style</legend><div class="four">
        <label><input type="radio" name="style" checked>Regular</label><label><input type="radio" name="style">Italic</label><label><input type="radio" name="style">Bold</label><label><input type="radio" name="style">Bold Italic</label></div></fieldset>
      <fieldset class="opts format"><legend>Preferred <u>o</u>utline format</legend><div class="two">
        <label><input type="radio" name="fmt" checked>TrueType (quadratic)</label><label><input type="radio" name="fmt">CFF / PostScript (cubic)</label></div></fieldset>
      <fieldset class="opts outlines"><legend><u>P</u>redefined outlines</legend>
        <p>To speed up creating your new font it is recommended to include outlines for several common characters.</p>
        <div class="two"><label><input type="radio" name="out" checked>Include outlines</label><label><input type="radio" name="out">Don't include outlines</label></div></fieldset>
      <div class="actions"><button type="button" class="btn" disabled>OK</button><button type="button" class="btn">Cancel</button><button type="button" class="btn">Help</button></div>
    </form>
  </div>
</div>
</body>
</html>
```
FILE: styles.css
```css
* { box-sizing: border-box; }
body { margin: 0; font: 12px/17px "Noto Sans", "Open Sans", sans-serif; color: #000; background: #f0f0f0; }
h1, h2, p { margin: 0; font-size: 12px; font-weight: 400; }
button, input, select, textarea { font: inherit; color: inherit; margin: 0; }
button { border: 0; padding: 0; background: none; }
svg { display: block; flex: none; }
.sprite { display: none; }

.window { position: relative; display: flex; flex-direction: column; height: 100vh; border: 1px solid #a6a6a6; overflow: hidden; }

.titlebar { display: flex; align-items: center; height: 30px; background: #fff; padding: 0 1px 0 8px; flex: none; }
.logo { width: 16px; height: 16px; }
.title { flex: 1; margin-left: 5px; color: #999; }
.caption { display: flex; }
.caption button { width: 45px; height: 28px; display: grid; place-items: center; }
.caption svg { width: 10px; height: 10px; fill: none; stroke: #8a8a8a; }

.grip { width: 6px; height: 26px; flex: none; background: conic-gradient(from 270deg at 2px 2px, #b4b4b4 90deg, transparent 0) 0 0 / 6px 4px; margin-left: 2px; margin-top: 1px; }
.grip.mid { width: 10px; margin-left: 0; background: conic-gradient(from 270deg at 2px 2px, #b4b4b4 90deg, transparent 0) 5px 0 / 10px 4px; }
.menubar { display: flex; align-items: center; height: 27px; flex: none; }
.menubar .grip { height: 19px; }
.menubar button { padding: 0 8px; }

.toolbars { height: 132px; flex: none; border-bottom: 1px solid #738cab; }
.toolbar { display: flex; align-items: center; height: 34px; }
.toolbar > button, .tool-end button { display: flex; align-items: center; width: 31px; height: 28px; padding-left: 3px; }
.toolbar .drop { width: 38px; }
.toolbar .drop.mid { width: 39px; }
.toolbar .drop.step { width: 40px; }
.toolbar .drop.wide { width: 44px; }
.toolbar button svg { width: 24px; height: 24px; fill: none; stroke: #c8c8c8; font: bold 12px "Noto Sans", sans-serif; }
.toolbar button svg.caret { width: 6px; height: 4px; margin-left: 1px; fill: #6c6c6c; stroke: none; }
.toolbar .wide svg.caret { width: 8px; margin-left: 7px; }
.toolbar text { fill: #c2c2c2; stroke: none; }
.toolbar text[fill="#fff"], .toolbar text.w { fill: #fff; }
.toolbar text[fill="#444"] { fill: #444; font-weight: 400; }
.toolbar text.d { fill: #a2a2a2; }
.toolbar text.n { font-weight: 400; }
.toolbar text.fx { font: italic 23px "Liberation Serif", serif; fill: #b5b5b5; }
.toolbar text.serif { font: bold 22px "Liberation Serif", serif; }
.toolbar .f { fill: #c8c8c8; stroke: none; }
.toolbar .k { stroke: #bdbdbd; }
.toolbar .l { fill: #d4d4d4; }
.toolbar .b { fill: #c2c2c2; }
.sep { width: 6px; height: 26px; flex: none; background: linear-gradient(#8c8c8c, #8c8c8c) 2px 0 / 1px 26px no-repeat; }
.tool-end { display: flex; align-items: center; margin-left: auto; padding-right: 66px; }

.select { position: relative; display: block; height: 25px; flex: none; }
.select select { appearance: none; width: 100%; height: 25px; border: 1px solid #ccc; border-radius: 0; background: #fff; padding: 0 3px; color: #777; opacity: 1; }
.select svg { position: absolute; right: 4px; top: 10px; width: 10px; height: 6px; fill: none; stroke: #aaa; pointer-events: none; }
.select.off select { background: #ccc; border-color: #bfbfbf; }
.select.text select { padding: 0 2px; }
.zoom { width: 72px; }

.workspace { flex: 1; display: flex; min-height: 0; padding: 6px; gap: 6px; }
.left { flex: 1; display: flex; flex-direction: column; justify-content: flex-end; min-width: 0; }
.dock { width: 313px; display: flex; flex-direction: column; gap: 5px; }
.panel-head { display: flex; align-items: center; height: 22px; background: #bfbfbf; padding: 0 6px 0 5px; flex: none; }
.panel-head button { height: 15px; }
.tex { flex: 1; height: 7px; margin: 0 9px 0 8px; background: conic-gradient(from 270deg at 1px 1px, #959595 90deg, transparent 0) 0 0 / 4px 4px, conic-gradient(from 270deg at 1px 1px, #959595 90deg, transparent 0) 2px 2px / 4px 4px; }
.panel-head svg { fill: none; stroke: #000; }
.pin { width: 9px; height: 12px; }
.x { width: 10px; height: 10px; margin-left: 6px; stroke-width: 2; }

.preview-bar { display: flex; height: 29px; background: #fbfbfb; padding: 4px 4px 0; gap: 6px; }
.preview-bar .off { width: 104px; }
.preview-bar .text { flex: 1; margin-left: 3px; }
.spin { display: flex; height: 25px; border: 1px solid #ccc; background: #fff; }
.spin input { flex: 1; width: 0; min-width: 0; border: 0; padding: 0; background: none; text-align: right; color: #777; height: 21px; }
.spin > span { width: 19px; display: flex; flex-direction: column; justify-content: space-evenly; align-items: center; }
.spin button { height: 9px; display: flex; align-items: center; }
.spin svg { width: 8px; height: 5px; fill: none; stroke: #666; stroke-width: 2; }
.s1 { width: 49px; margin-left: 2px; }
.s2 { width: 57px; margin-left: 3px; }
.s3 { width: 65px; }
.toggles { display: flex; gap: 8px; margin: -1px 0 0 1px; }
.sq { width: 23px; height: 22px; background: #ccc; border: 1px solid #bfbfbf; display: grid; place-items: center; color: #999; font-weight: 700; flex: none; }
.toggles svg { width: 14px; height: 14px; fill: none; stroke: #a8a8a8; }

.preview-body { display: flex; height: 112px; }
.list { width: 200px; border: 1px solid #828790; background: #fff; }
.splitter { width: 5px; display: grid; place-items: center; }
.splitter span { width: 3px; height: 27px; background: conic-gradient(from 270deg at 2px 2px, #a0a0a0 90deg, transparent 0) 0 0 / 3px 4px; }
.stage { flex: 1; display: flex; flex-direction: column; }
.canvas { flex: 1; background: #fff; display: flex; justify-content: flex-end; }
.info { height: 25px; border: 1px solid #ccc; background: #f0f0f0; box-shadow: inset 0 0 0 1px #fff; }
.bar { width: 16px; background: #f0f0f0; display: flex; flex-direction: column; justify-content: space-between; flex: none; }
.bar button { height: 17px; display: grid; place-items: center; }
.bar svg { width: 9px; height: 6px; fill: none; stroke: #bbb; stroke-width: 2; }

.glyph { display: flex; flex-direction: column; flex: 1; min-height: 0; }
.glyph-body { flex: 1; min-height: 0; display: flex; }
.fields { flex: 1; overflow: hidden; background: #fbfbfb; padding: 8px 5px 0 8px; color: #a0a0a0; }
.row { display: flex; height: 28px; align-items: flex-start; }
.row label { width: 76px; line-height: 21px; flex: none; display: flex; }
.row label span { margin-left: auto; margin-right: 32px; }
.row > input { flex: 1; min-width: 0; height: 25px; border: 1px solid #ccc; background: #fff; }
.row .sq { width: 21px; height: 20px; margin-left: 5px; }
.row .sq + .sq { margin-left: 6px; }
.row .sq:last-child { margin-right: 1px; }
.row .sq svg { width: 17px; height: 17px; }
.row.cut { overflow: hidden; height: 24px; margin-bottom: 4px; }
.short { width: 90px; }
.grow { flex: 1; }
.comp { margin-left: auto; margin-right: 19px; line-height: 21px; }
.note { position: relative; flex: 1; }
.note textarea { width: 100%; height: 50px; border: 1px solid #ccc; border-radius: 0; background: #fff; resize: none; display: block; }
.note svg { position: absolute; right: 2px; top: 2px; width: 16px; height: 20px; padding: 7px 3px; background: #f0f0f0; fill: none; stroke: #bbb; stroke-width: 2; }
.live { width: 16px; padding-right: 1px; }
.live i { background: #cdcdcd; height: 150px; margin-bottom: auto; }
.live svg { stroke: #555; }

.transform { flex: none; }
.tabs { background: #fbfbfb; padding: 2px 4px 0 0; }
.tabrow { display: grid; grid-template-columns: 77fr 79fr 77fr 76fr; margin-left: 2px; }
.tabrow.second { grid-template-columns: 99fr 112fr 98fr; }
.tabrow button { height: 22px; background: #f0f0f0; border: 1px solid #dcdcdc; border-width: 1px 1px 0 0; }
.tabrow button:first-child { border-left-width: 1px; padding-right: 6px; }
.tabrow:first-child button:nth-child(3) { padding-right: 10px; }
.tabrow .on { height: 26px; margin: -3px 0 0 -2px; background: #fff; position: relative; }
.tabrow .on:first-child { padding: 0 0 2px; }
.tabpage { height: 109px; margin-right: 2px; margin-top: -1px; padding: 12px 15px 3px; background: #fff; border: 1px solid #dcdcdc; display: flex; flex-direction: column; overflow: hidden; }
.pos { display: flex; gap: 19px; }
.posfields { display: flex; flex-direction: column; gap: 3px; }
.posrow { display: flex; align-items: center; }
.posrow label { width: 76px; }
.origin { display: grid; grid-template-columns: repeat(3, 17px); grid-auto-rows: 16px; padding-top: 2px; }
.check { display: flex; align-items: center; gap: 3px; color: #888; margin-top: 3px; }
.check input { appearance: none; width: 13px; height: 13px; border: 1px solid #ccc; background: #fff; }
.applyrow { flex: 1; min-height: 0; overflow: hidden; margin-top: 7px; padding-left: 125px; }

input[type="radio"] { appearance: none; width: 13px; height: 13px; border: 1px solid #444; border-radius: 50%; background: #fff; flex: none; }
input[type="radio"]:checked { background: radial-gradient(circle, #333 0 3px, #fff 4px); }
.origin input[type="radio"] { border-color: #ccc; }
.origin input[type="radio"]:checked { background: radial-gradient(circle, #c4c4c4 0 3px, #fff 4px); }

.btn { width: 78px; height: 22px; border: 1px solid #adadad; background: #e1e1e1; padding-bottom: 1px; }
.btn:disabled { background: #ccc; border-color: #bfbfbf; color: #888; }

.status { height: 27px; flex: none; border-top: 1px solid #d7d7d7; display: flex; align-items: center; }
.status span { height: 20px; border-right: 1px solid #8c8c8c; width: 409px; }
.status span + span { width: auto; flex: 1; }
.status svg { width: 9px; height: 9px; margin: 12px 3px 0 128px; fill: #bfbfbf; }

.dialog { position: absolute; left: 254px; top: 148px; width: 434px; background: #f0f0f0; border: 1px solid #666; box-shadow: 0 4px 16px 2px rgba(0, 0, 0, .4); }
.dialog-head { display: flex; justify-content: space-between; align-items: center; height: 25px; background: #fff; padding: 0 9px 1px 3px; }
.dialog-head svg { width: 11px; height: 11px; fill: none; stroke: #000; }
.dialog-body { padding: 8px 9px 8px 8px; }
fieldset { margin: 0; min-width: 0; border: 1px solid #dcdcdc; padding: 0 7px; }
legend { padding: 0 14px 0 4px; height: 17px; }
.name { height: 44px; }
.name input { display: block; width: 100%; height: 25px; margin-top: -1px; border: 1px solid #000; background: #fff; outline: 0; }
.opts { height: 44px; margin-top: 6px; padding: 0 10px; }
.opts legend { margin-left: -3px; }
.opts label { display: flex; align-items: center; gap: 3px; white-space: nowrap; }
.four, .two { margin-top: 1px; }
.four { display: grid; grid-template-columns: 98px 98px 99px 1fr; }
.two { display: grid; grid-template-columns: 196px 1fr; }
.format { margin: 7px -1px 0 1px; }
.outlines { height: 78px; margin-top: 9px; }
.outlines p { padding-left: 2px; margin: -1px 0 3px; }
.actions { display: flex; justify-content: flex-end; gap: 9px; margin-top: 10px; }
```
